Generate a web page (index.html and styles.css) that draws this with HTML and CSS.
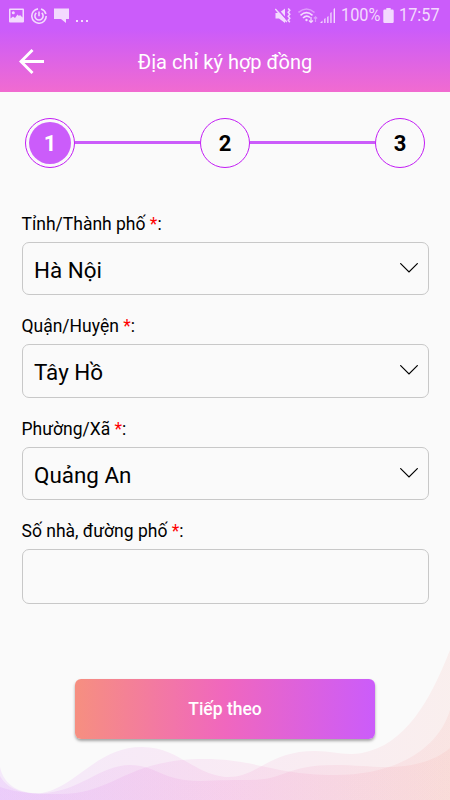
FILE: index.html
```html
<!DOCTYPE html>
<html lang="vi">
<head>
  <meta charset="UTF-8">
  <title>Địa chỉ ký hợp đồng</title>
  <meta name="viewport" content="width=device-width, initial-scale=1.0">
  <link rel="stylesheet" href="styles.css">
</head>
<body>
  <header class="header">
    <div class="status-bar">
      <div class="status-left">
        <svg width="15" height="15" viewBox="0 0 15 15">
          <path fill="currentColor" fill-rule="evenodd" d="M1 0.5h13a1 1 0 0 1 1 1v12a1 1 0 0 1-1 1h-13a1 1 0 0 1-1-1v-12a1 1 0 0 1 1-1zM1.5 2v8.500l2.500-2 2 1.500 2.500-3.500 1.500 1.500 1-1 2.500 2.500V2z"/>
          <circle cx="4.300" cy="4.700" r="1.500" fill="currentColor"/>
        </svg>
        <svg width="16" height="16" viewBox="0 0 16 16" fill="none" stroke="currentColor" stroke-width="1.600">
          <path d="M10 1.100A7.200 7.200 0 0 1 14.900 6M15.200 8A7.200 7.200 0 1 1 7 0.900"/>
          <path d="M5.300 4.800A4.100 4.100 0 1 0 10.700 4.800M8 3.500v4.800"/>
        </svg>
        <svg width="15" height="15" viewBox="0 0 15 15">
          <path fill="currentColor" d="M0 0.500h15v10.500h-3v4l-5-4h-7z"/>
        </svg>
        <span class="dots"><i></i><i></i><i></i></span>
      </div>
      <div class="status-right">
        <svg class="mute" width="17" height="16" viewBox="0 0 17 16">
          <path fill="currentColor" d="M0.500 5h3.500l6-4.500v14.500l-6-4.500h-3.500z"/>
          <path stroke="#cb5cfa" stroke-width="1.800" d="M1.500 0l11 12.500"/>
          <path stroke="currentColor" stroke-width="1.400" d="M0.300 1l11.500 13"/>
          <path fill="none" stroke="currentColor" stroke-width="1.500" d="M13.200 0.500l1.600 1.700-1.600 2 1.600 2-1.600 2 1.600 2-1.600 2 1.600 2"/>
        </svg>
        <svg class="wifi" width="20" height="16" viewBox="0 0 20 16" fill="none" stroke="currentColor" stroke-width="1.600">
          <path opacity=".5" d="M0.500 4.500Q8.500 -2.500 16.500 4.500"/>
          <path d="M2.500 7.300Q8.500 2 14.500 7.300M5 10Q8.500 6.500 12 9.500"/>
          <circle cx="8.500" cy="12" r="1.200" fill="currentColor" stroke="none"/>
          <path stroke-width="1.200" d="M13 9v5.500M11 12.500l2 2 2-2"/>
          <path opacity=".5" stroke-width="1.200" d="M17.500 14v-5M15.800 10.500l1.700-1.700 1.700 1.700"/>
        </svg>
        <svg class="signal" width="15" height="15" viewBox="0 0 15 15">
          <path fill="currentColor" d="M0 15l2.500-2.500v2.500zM4.200 15v-4l1.300-1v5zM7.200 15v-6l1.300-1v7zM10.300 15v-10l1.300-1v11zM13.600 15v-14l1.400-1v15z"/>
        </svg>
        <span class="percent">100%</span>
        <svg class="battery" width="11" height="15" viewBox="0 0 11 15">
          <path fill="currentColor" d="M3.300 0h4.400v1.500h1.800a1.200 1.200 0 0 1 1.200 1.200v11a1.200 1.200 0 0 1-1.200 1.200h-8a1.200 1.200 0 0 1-1.200-1.200v-11a1.200 1.200 0 0 1 1.200-1.200h1.800z"/>
        </svg>
        <span class="time">17:57</span>
      </div>
    </div>
    <div class="nav">
      <svg class="back" width="25" height="25" viewBox="0 0 25 25" fill="none" stroke="#fff" stroke-width="2.900">
        <path d="M25 12.500H2M13.500 1L2 12.500l11.500 11.500"/>
      </svg>
      <h1>Địa chỉ ký hợp đồng</h1>
    </div>
  </header>

  <main class="content">
    <div class="steps">
      <div class="step active"><span>1</span></div>
      <div class="line"></div>
      <div class="step"><span>2</span></div>
      <div class="line"></div>
      <div class="step"><span>3</span></div>
    </div>

    <form class="form">
      <div class="field">
        <label>Tỉnh/Thành phố <b>*</b>:</label>
        <div class="box">
          <span>Hà Nội</span>
          <svg width="18" height="10" viewBox="0 0 18 10"><path d="M0.300 0.300L9 9l8.700-8.700"/></svg>
        </div>
      </div>
      <div class="field">
        <label>Quận/Huyện <b>*</b>:</label>
        <div class="box">
          <span>Tây Hồ</span>
          <svg width="18" height="10" viewBox="0 0 18 10"><path d="M0.300 0.300L9 9l8.700-8.700"/></svg>
        </div>
      </div>
      <div class="field">
        <label>Phường/Xã <b>*</b>:</label>
        <div class="box">
          <span>Quảng An</span>
          <svg width="18" height="10" viewBox="0 0 18 10"><path d="M0.300 0.300L9 9l8.700-8.700"/></svg>
        </div>
      </div>
      <div class="field">
        <label for="street">Số nhà, đường phố <b>*</b>:</label>
        <input class="box street" type="text" id="street">
      </div>
      <button class="next" type="button">Tiếp theo</button>
    </form>
  </main>

  <svg class="waves" width="450" height="160" viewBox="0 0 450 160">
    <defs>
      <linearGradient id="wave" gradientUnits="userSpaceOnUse" x1="0" y1="0" x2="450" y2="0">
        <stop offset="0" stop-color="#c455fa"/>
        <stop offset=".5" stop-color="#ec62c4"/>
        <stop offset="1" stop-color="#f58a80"/>
      </linearGradient>
    </defs>
    <g fill="url(#wave)" fill-opacity=".1">
      <path d="M0 127C4 146 20 153 38 153.500C75 150 95 107 142 107C178 107 192 133 225 137C257 139 267 111 315 111C335 111 342 116 362 113C405 105 430 61 450 10V160H0z"/>
      <path d="M0 136C8 150 22 153 40 153.500C80 152 100 125 130 125C156 125 162 141 200 141C220 140 235 140 250 140C285 140 285 125 335 125C355 125 370 127 385 127C420 127 438 118 450 108V160H0z"/>
      <path d="M0 147C20 154 40 154 60 154C115 154 125 119 205 119C255 119 275 135 335 135C395 135 438 110 450 70V160H0z"/>
    </g>
  </svg>
</body>
</html>
```

FILE: styles.css
```css
* {
  box-sizing: border-box;
}

body {
  margin: 0;
  height: 100vh;
  background: #fafafa;
  color: #000;
  font-family: Roboto, sans-serif;
  position: relative;
  overflow: hidden;
}

.header {
  height: 92px;
  background: linear-gradient(#cb5cfa 0, #cb5cfa 32%, #f16bd0 100%);
  color: #fff;
}

.status-bar {
  height: 31px;
  padding: 0 10px 0 9px;
  display: flex;
  justify-content: space-between;
  align-items: center;
  color: #f3dafe;
}

.status-left,
.status-right {
  display: flex;
  align-items: center;
}

.status-left {
  gap: 7px;
}

.dots {
  display: flex;
  gap: 3px;
  padding-top: 10px;
}

.dots i {
  width: 2px;
  height: 2px;
  background: currentColor;
}

.wifi {
  margin-left: 6px;
}

.signal {
  margin: 0 6px 0 2px;
}

.percent,
.time {
  font-size: 18.5px;
  line-height: 31px;
  white-space: nowrap;
  transform: scaleX(.88);
  transform-origin: left;
}

.percent {
  width: 39px;
}

.battery {
  margin: 0 5px 0 3px;
}

.time {
  width: 41px;
}

.nav {
  height: 61px;
  position: relative;
  display: flex;
  align-items: center;
  justify-content: center;
}

.back {
  position: absolute;
  left: 19px;
  top: 18px;
}

.nav h1 {
  margin: 0;
  font-size: 20px;
  font-weight: 400;
}

.steps {
  display: flex;
  align-items: center;
  padding: 25.5px 25px 0;
}

.step {
  width: 50px;
  height: 50px;
  padding: 3px;
  border: 1px solid #c31df5;
  border-radius: 50%;
  font-size: 22px;
  font-weight: 700;
}

.step span {
  display: flex;
  align-items: center;
  justify-content: center;
  height: 100%;
  padding-top: 1px;
  border-radius: 50%;
}

.step.active span {
  background: #cb5cfa;
  color: #fff;
}

.line {
  flex: 1;
  height: 3px;
  background: #cb5cfa;
}

.form {
  padding: 44px 21.5px 0;
  display: flex;
  flex-direction: column;
}

.field {
  margin-bottom: 19px;
}

.field label {
  display: block;
  height: 30px;
  line-height: 25px;
  font-size: 17.5px;
}

.field b {
  color: #f00;
  font-weight: 400;
}

.box {
  display: flex;
  align-items: center;
  justify-content: space-between;
  width: 100%;
  height: 53.5px;
  padding: 3px 10px 0 11.5px;
  border: 1px solid #c8c8c8;
  border-radius: 7px;
  background: transparent;
  font-size: 22.4px;
}

.box svg {
  margin-bottom: 4px;
  fill: none;
  stroke: #000;
  stroke-width: 1.2;
}

.street {
  height: 55px;
  font-family: inherit;
}

.next {
  position: relative;
  z-index: 1;
  align-self: center;
  width: 300px;
  height: 60px;
  margin-top: 56px;
  border: 0;
  border-radius: 6px;
  background: linear-gradient(90deg, #f68f80, #f067be 50%, #cb5cfa);
  box-shadow: 0 2px 3px rgba(0, 0, 0, .35);
  color: #fff;
  font: 500 17.5px Roboto, sans-serif;
}

/* decoration behind the button */
.waves {
  position: absolute;
  left: 0;
  bottom: 0;
}
```
